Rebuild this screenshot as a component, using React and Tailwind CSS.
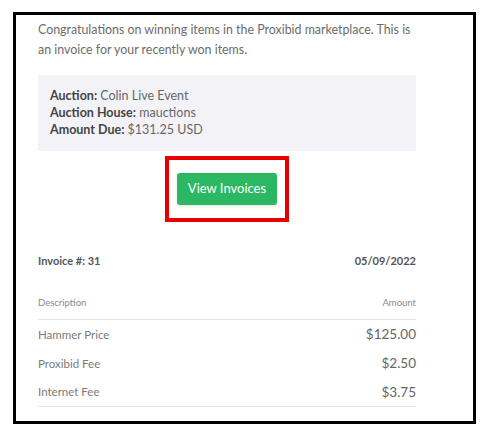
export default function App() {
  const rows = [
    { label: "Hammer Price", amount: "$125.00" },
    { label: "Proxibid Fee", amount: "$2.50" },
    { label: "Internet Fee", amount: "$3.75" },
  ];

  return (
    <div className="w-[485px] h-[435px] bg-white pt-3 pl-[13px]" style={{ fontFamily: "Lato, 'Noto Sans', sans-serif" }}>
      <div className="w-[463px] h-[412px] border-[3px] border-black pl-[22px] pr-[57px] pt-[5px]">
        {/* Intro */}
        <p className="text-[12.4px] leading-[20px] text-[#6b6b6b] -mr-2">
          Congratulations on winning items in the Proxibid marketplace. This is an invoice for your recently won items.
        </p>

        {/* Summary box */}
        <div className="mt-[15px] bg-[#f3f3f7] px-3 pt-3 pb-[13px] text-[12.5px] leading-[17px] text-[#666]">
          <div>
            <span className="font-bold text-[#444]">Auction:</span> Colin Live Event
          </div>
          <div>
            <span className="font-bold text-[#444]">Auction House:</span> mauctions
          </div>
          <div>
            <span className="font-bold text-[#444]">Amount Due:</span> $131.25 USD
          </div>
        </div>

        {/* Button */}
        <div className="flex justify-center mt-[5px]">
          <div className="border-4 border-[#e60000] px-2 py-[13px]">
            <button className="w-[100px] h-8 rounded-[3px] bg-[#2cb863] text-white text-[13px] shadow-sm">
              View Invoices
            </button>
          </div>
        </div>

        {/* Invoice header */}
        <div className="mt-[31px] flex justify-between text-[11px] leading-[16px] font-bold text-[#555]">
          <span>Invoice #: 31</span>
          <span>05/09/2022</span>
        </div>

        {/* Table */}
        <div className="mt-[27px]">
          <div className="flex justify-between text-[9.5px] leading-[14px] text-[#8a8a8a] pb-[9px] border-b border-[#e6e6e6]">
            <span>Description</span>
            <span>Amount</span>
          </div>
          {rows.map((r, i) => (
            <div
              key={r.label}
              className={
                "h-[29px] flex items-center justify-between " +
                (i === rows.length - 1 ? "border-b border-[#e6e6e6]" : "")
              }
            >
              <span className="text-[11.5px] text-[#7a7a7a]">{r.label}</span>
              <span className="text-[13.5px] text-[#666]">{r.amount}</span>
            </div>
          ))}
        </div>
      </div>
    </div>
  );
}
